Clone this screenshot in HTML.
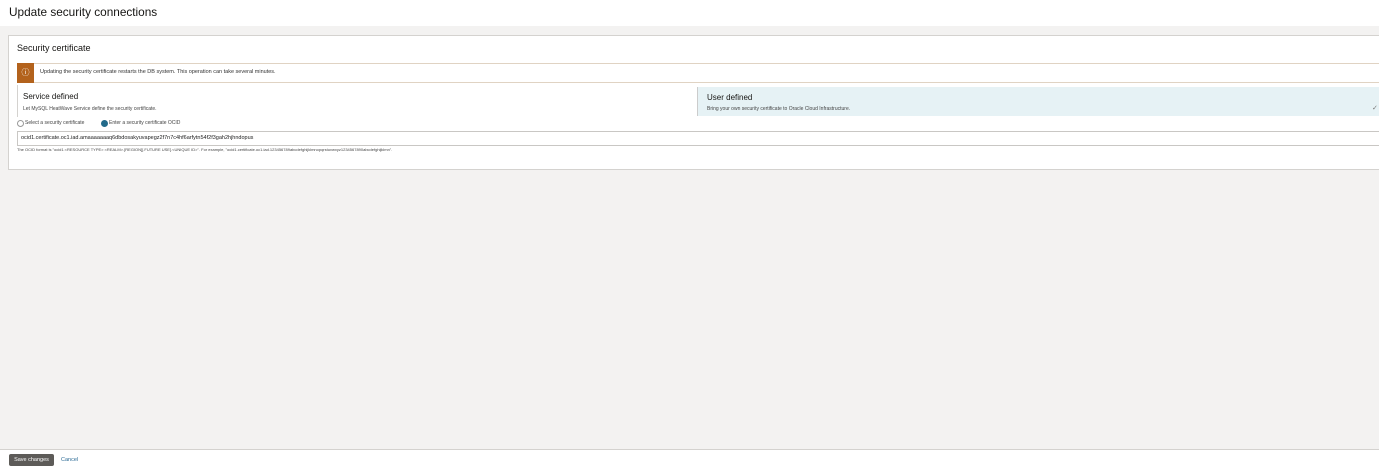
<!DOCTYPE html>
<html><head><style>
body{margin:0;width:1379px;height:468px;overflow:hidden;background:#f3f2f1;font-family:"Liberation Sans",sans-serif;color:#161513;position:relative}
.abs{position:absolute}
</style></head><body>
<div class="abs" style="left:0;top:0;width:1379px;height:26px;background:#fff"></div>
<div class="abs" style="left:9px;top:5px;font-size:11.8px;">Update security connections</div>
<div class="abs" style="left:8px;top:35px;width:1371px;height:135px;background:#fff;border:1px solid #d4d2cf;border-right:none;box-sizing:border-box"></div>
<div class="abs" style="left:17px;top:43px;font-size:9px;">Security certificate</div>
<div class="abs" style="left:17px;top:63px;width:1362px;height:20px;background:#fff;border:1px solid #e0d3c3;border-right:none;box-sizing:border-box"></div>
<div class="abs" style="left:17px;top:63px;width:17px;height:20px;background:#b3621c;color:#fff;font-size:8px;text-align:center;line-height:20px">ⓘ</div>
<div class="abs" style="left:40px;top:69px;font-size:5.5px;color:#333">Updating the security certificate restarts the DB system. This operation can take several minutes.</div>
<div class="abs" style="left:17px;top:85px;width:678px;height:32px;border-left:1px solid #d4d2cf"></div>
<div class="abs" style="left:23px;top:92px;font-size:8px;">Service defined</div>
<div class="abs" style="left:23px;top:106px;font-size:5px;color:#444">Let MySQL HeatWave Service define the security certificate.</div>
<div class="abs" style="left:697px;top:87px;width:682px;height:29px;background:#e6f2f5;border-left:1px solid #ccc"></div>
<div class="abs" style="left:707px;top:93px;font-size:8px;">User defined</div>
<div class="abs" style="left:707px;top:106px;font-size:5px;color:#444">Bring your own security certificate to Oracle Cloud Infrastructure.</div>
<div class="abs" style="left:1372px;top:104px;font-size:7px;color:#777">✓</div>
<div class="abs" style="left:17px;top:120px;width:5px;height:5px;border:1px solid #999;border-radius:50%"></div>
<div class="abs" style="left:25px;top:120px;font-size:5px;color:#444">Select a security certificate</div>
<div class="abs" style="left:101px;top:120px;width:5px;height:5px;border:1px solid #236a8a;background:#236a8a;border-radius:50%"></div>
<div class="abs" style="left:109px;top:120px;font-size:5px;color:#444">Enter a security certificate OCID</div>
<div class="abs" style="left:17px;top:131px;width:1362px;height:15px;border:1px solid #c9c7c4;border-right:none;box-sizing:border-box"></div>
<div class="abs" style="left:21px;top:135px;font-size:5.5px;color:#222">ocid1.certificate.oc1.iad.amaaaaaaaq6dbdosakyuvapegz2f7n7c4hf6arfytn54f2f3gah2hjhndopus</div>
<div class="abs" style="left:17px;top:147px;font-size:4px;color:#444;white-space:nowrap">The OCID format is "ocid1.&lt;RESOURCE TYPE&gt;.&lt;REALM&gt;.[REGION][.FUTURE USE].&lt;UNIQUE ID&gt;". For example, "ocid1.certificate.oc1.iad.123456789abcdefghijklmnopqrstuvwxyz1234567890abcdefghijklmn".</div>
<div class="abs" style="left:0;top:449px;width:1379px;height:19px;background:#fff;border-top:1px solid #d4d2cf"></div>
<div class="abs" style="left:9px;top:454px;width:45px;height:12px;background:#5d5b58;border-radius:2px;color:#fff;font-size:5.5px;text-align:center;line-height:12px">Save changes</div>
<div class="abs" style="left:61px;top:457px;font-size:5.5px;color:#2b6a95">Cancel</div>
</body></html>
